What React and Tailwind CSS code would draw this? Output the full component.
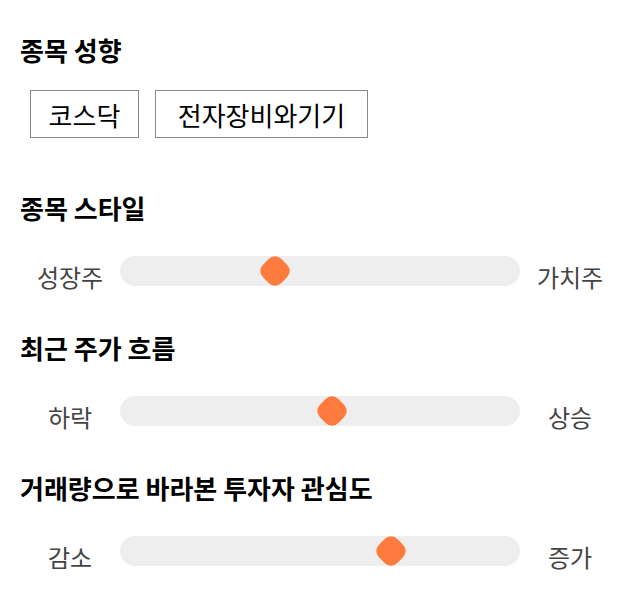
const sections = [
    { title: '종목 스타일', left: '성장주', right: '가치주', value: 38.7 },
    { title: '최근 주가 흐름', left: '하락', right: '상승', value: 53.1 },
    { title: '거래량으로 바라본 투자자 관심도', left: '감소', right: '증가', value: 67.8 },
];

const Heading = ({ children, className = '' }) => {
    return (
        <h2 className={`text-[26px] font-bold leading-[36px] text-black ${className}`}>{children}</h2>
    );
};

const RangeRow = ({ left, right, value }) => {
    return (
        <div className="mt-[30px] flex items-start">
            <span className="mt-[6px] w-[100px] text-center text-[24px] leading-[30px] text-[#444]">{left}</span>
            <div className="relative h-[30px] flex-1 overflow-hidden rounded-full bg-[#eeeeee]">
                <div
                    className="absolute top-1/2 h-[26px] w-[26px] -translate-x-1/2 -translate-y-1/2 rotate-45 rounded-[9px] bg-[#ff7a3d]"
                    style={{ left: `${value}%` }}
                ></div>
            </div>
            <span className="mt-[6px] w-[100px] text-center text-[24px] leading-[30px] text-[#444]">{right}</span>
        </div>
    );
};

const App = () => {
    return (
        <div className="min-h-[606px] w-[640px] bg-white px-5 pt-[32px] font-['Noto_Sans_CJK_KR',sans-serif]">
            <Heading>종목 성향</Heading>
            <div className="mt-[22px] ml-[10px] flex gap-4">
                <div className="flex h-[48px] w-[109px] items-center justify-center border border-[#888] text-[26px] text-black">
                    코스닥
                </div>
                <div className="flex h-[48px] w-[213px] items-center justify-center border border-[#888] text-[26px] text-black">
                    전자장비와기기
                </div>
            </div>

            {sections.map((section, index) => (
                <div key={section.title} className={index === 0 ? 'mt-[52px]' : 'mt-[38px]'}>
                    <Heading>{section.title}</Heading>
                    <RangeRow left={section.left} right={section.right} value={section.value} />
                </div>
            ))}
        </div>
    );
};

export default App;
